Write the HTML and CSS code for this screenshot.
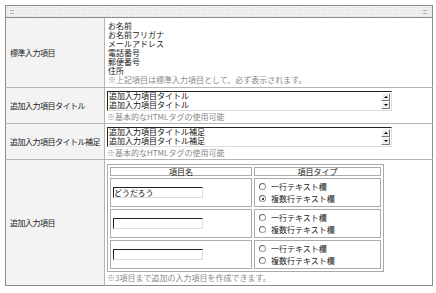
FILE: index.html
```html
<!DOCTYPE html>
<html lang="ja">
<head>
    <meta charset="UTF-8">
    <link rel="stylesheet" href="styles.css">
    <title>入力項目設定</title>
</head>
<body>
    <table class="form-table">
        <colgroup>
            <col class="label-col">
            <col>
        </colgroup>
        <tr>
            <td class="bar" colspan="2"><div class="bar-inner"><span>::</span><span>::</span></div></td>
        </tr>
        <tr>
            <th>標準入力項目</th>
            <td class="std">
                <div>お名前</div>
                <div>お名前フリガナ</div>
                <div>メールアドレス</div>
                <div>電話番号</div>
                <div>郵便番号</div>
                <div>住所</div>
                <div class="note">※上記項目は標準入力項目として、必ず表示されます。</div>
            </td>
        </tr>
        <tr>
            <th>追加入力項目タイトル</th>
            <td>
                <div class="area">
                    <div class="area-text">追加入力項目タイトル<br>追加入力項目タイトル</div>
                    <div class="scroll"><span class="up"></span><span class="down"></span></div>
                </div>
                <div class="note">※基本的なHTMLタグの使用可能</div>
            </td>
        </tr>
        <tr>
            <th>追加入力項目タイトル補足</th>
            <td>
                <div class="area">
                    <div class="area-text">追加入力項目タイトル補足<br>追加入力項目タイトル補足</div>
                    <div class="scroll"><span class="up"></span><span class="down"></span></div>
                </div>
                <div class="note">※基本的なHTMLタグの使用可能</div>
            </td>
        </tr>
        <tr>
            <th>追加入力項目</th>
            <td class="extra">
                <table class="items">
                    <tr>
                        <td class="head name-col">項目名</td>
                        <td class="head">項目タイプ</td>
                    </tr>
                    <tr>
                        <td><div class="input">どうだろう</div></td>
                        <td>
                            <div class="radio"><span class="dot"></span>一行テキスト欄</div>
                            <div class="radio"><span class="dot on"></span>複数行テキスト欄</div>
                        </td>
                    </tr>
                    <tr>
                        <td><div class="input"></div></td>
                        <td>
                            <div class="radio"><span class="dot"></span>一行テキスト欄</div>
                            <div class="radio"><span class="dot"></span>複数行テキスト欄</div>
                        </td>
                    </tr>
                    <tr>
                        <td><div class="input"></div></td>
                        <td>
                            <div class="radio"><span class="dot"></span>一行テキスト欄</div>
                            <div class="radio"><span class="dot"></span>複数行テキスト欄</div>
                        </td>
                    </tr>
                </table>
                <div class="note">※3項目まで追加の入力項目を作成できます。</div>
            </td>
        </tr>
    </table>
</body>
</html>
```

FILE: styles.css
```css
body {
    margin: 0;
    padding: 5px;
    background-color: white;
    font-family: "Noto Sans CJK JP", "DejaVu Sans", sans-serif;
    font-size: 8px;
    line-height: 9px;
    color: #222;
}

.form-table {
    width: 428px;
    table-layout: fixed;
    border-collapse: collapse;
    border: 1px solid #8c8c8c;
}

.label-col {
    width: 99px;
}

.form-table th,
.form-table > tbody > tr > td {
    border-top: 1px solid #b4b4b4;
    padding: 0;
    vertical-align: middle;
}

.form-table th {
    background-color: #f3f3f3;
    border-right: 1px solid #b4b4b4;
    font-weight: normal;
    text-align: left;
    padding-left: 4px;
    letter-spacing: -0.5px;
    white-space: nowrap;
}

.form-table > tbody > tr > td {
    padding: 3px 2px 2px 2px;
}

.form-table td.std {
    padding: 3px 2px 3px 3px;
}

.form-table td.bar {
    padding: 0;
    border-top: none;
    border-bottom: 1px solid #8c8c8c;
}

.bar-inner {
    height: 11px;
    padding: 0 5px 0 4px;
    background-color: #f0f0f0;
    background-image: radial-gradient(#d6d6d6 0.6px, transparent 0.7px);
    background-size: 3px 3px;
    display: flex;
    justify-content: space-between;
    align-items: center;
    color: #555;
    font-size: 7px;
    line-height: 7px;
}

.note {
    color: #888;
}

.area {
    display: flex;
    width: 283px;
    height: 18px;
    border-top: 1px solid #222;
    border-left: 1px solid #222;
    border-bottom: 1px solid #ddd;
    border-right: 1px solid #ddd;
    margin-bottom: 1px;
}

.area-text {
    flex: 1;
    padding: 0 0 0 1px;
    line-height: 8.5px;
    color: #111;
}

.scroll {
    width: 9px;
    display: flex;
    flex-direction: column;
    justify-content: space-between;
    padding: 1px 1px 1px 0;
}

.scroll span {
    height: 6px;
    background-color: #eee;
    border: 1px solid #777;
    border-top-color: #fff;
    border-left-color: #fff;
    position: relative;
}

.scroll .up::after,
.scroll .down::after {
    content: "";
    position: absolute;
    left: 2px;
    top: 2px;
    border-left: 2px solid transparent;
    border-right: 2px solid transparent;
}

.scroll .up::after {
    border-bottom: 2px solid #000;
}

.scroll .down::after {
    border-top: 2px solid #000;
}

.form-table td.extra {
    padding: 4px 2px 3px 2px;
}

.items {
    width: 277px;
    border: 1px solid #aaa;
    border-spacing: 2px;
    margin-bottom: 1px;
}

.items td {
    border: 1px solid #aaa;
    padding: 0 2px;
    height: 27px;
}

.items td.head {
    height: 7px;
    text-align: center;
    line-height: 7px;
}

.items td.name-col {
    width: 136px;
}

.input {
    width: 88px;
    height: 9px;
    border-top: 1px solid #222;
    border-left: 1px solid #222;
    border-bottom: 1px solid #ddd;
    border-right: 1px solid #ddd;
    line-height: 9px;
    color: #111;
}

.radio {
    display: flex;
    align-items: center;
    height: 12px;
    padding-left: 2px;
}

.dot {
    width: 5px;
    height: 5px;
    border: 1px solid #999;
    border-top-color: #666;
    border-left-color: #666;
    border-radius: 50%;
    margin-right: 5px;
    position: relative;
}

.dot.on::after {
    content: "";
    position: absolute;
    left: 1.5px;
    top: 1.5px;
    width: 2px;
    height: 2px;
    border-radius: 50%;
    background-color: #000;
}
```
